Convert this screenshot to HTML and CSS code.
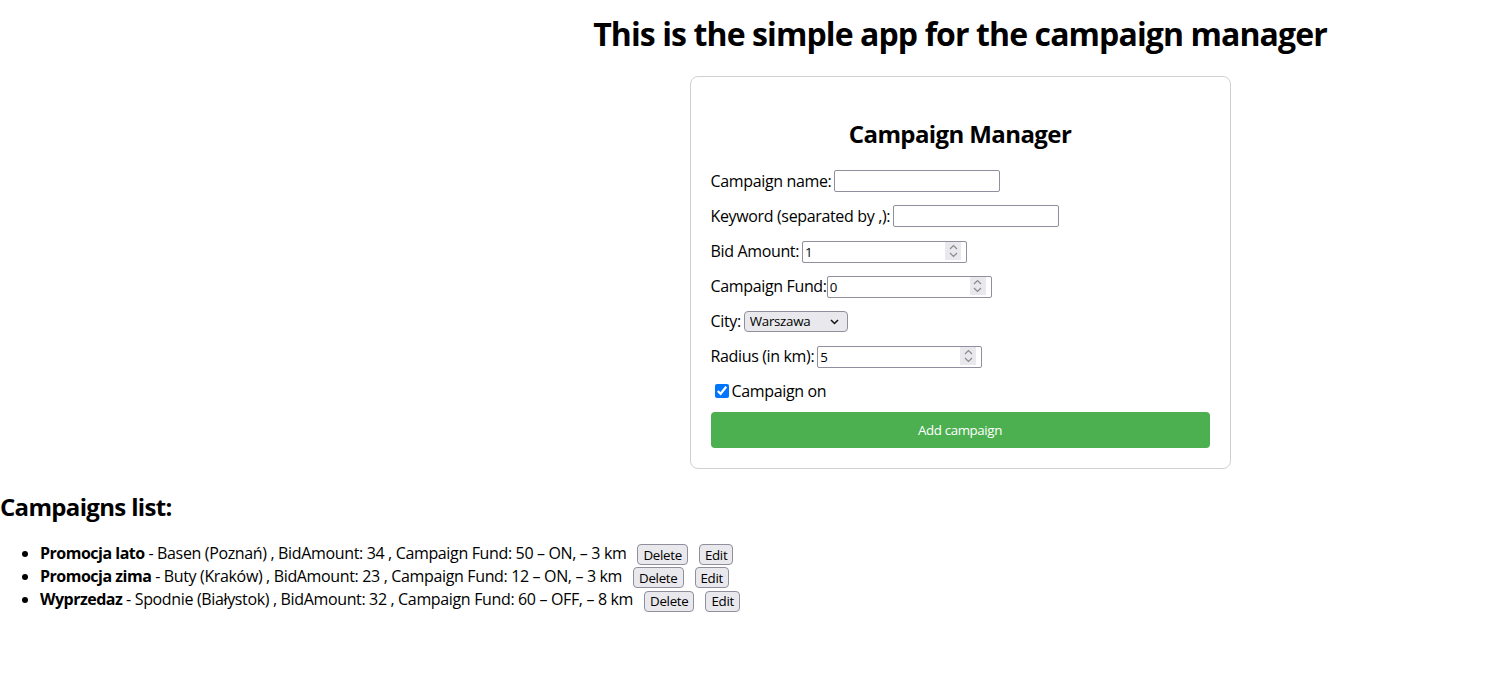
FILE: index.html
```html
<!DOCTYPE html>
<html lang="en">
<head>
<meta charset="utf-8">
<title>Campaign Manager</title>
<link rel="stylesheet" href="styles.css">
</head>
<body>
<main class="app">
  <section class="top">
    <h1 class="title">This is the simple app for the campaign manager</h1>
    <div class="card">
      <h2 class="card-title">Campaign Manager</h2>
      <form class="form">
        <div class="row"><label class="sp">Campaign name:</label><input class="text" type="text"></div>
        <div class="row"><label class="sp">Keyword (separated by ,):</label><input class="text" type="text"></div>
        <div class="row"><label class="sp">Bid Amount:</label><span class="num"><input class="text" type="text" value="1"><span class="spin"><svg width="9" height="14" viewBox="0 0 9 14"><path d="M1 5 L4.5 1.5 L8 5 M1 9 L4.5 12.5 L8 9" fill="none" stroke="#8a8a8a" stroke-width="1.2"/></svg></span></span></div>
        <div class="row"><label>Campaign Fund:</label><span class="num"><input class="text" type="text" value="0"><span class="spin"><svg width="9" height="14" viewBox="0 0 9 14"><path d="M1 5 L4.5 1.5 L8 5 M1 9 L4.5 12.5 L8 9" fill="none" stroke="#8a8a8a" stroke-width="1.2"/></svg></span></span></div>
        <div class="row"><label class="sp">City:</label><span class="sel"><select class="select"><option>Warszawa</option><option>Kraków</option><option>Poznań</option><option>Białystok</option></select><svg class="chev" width="9" height="6" viewBox="0 0 9 6"><path d="M1 1 L4.5 4.5 L8 1" fill="none" stroke="#111" stroke-width="1.5"/></svg></span></div>
        <div class="row"><label class="sp">Radius (in km):</label><span class="num"><input class="text" type="text" value="5"><span class="spin"><svg width="9" height="14" viewBox="0 0 9 14"><path d="M1 5 L4.5 1.5 L8 5 M1 9 L4.5 12.5 L8 9" fill="none" stroke="#8a8a8a" stroke-width="1.2"/></svg></span></span></div>
        <div class="row row-check"><input class="check" type="checkbox" checked><label>Campaign on</label></div>
        <button class="add" type="button">Add campaign</button>
      </form>
    </div>
  </section>
  <section class="list">
    <h2 class="list-title">Campaigns list:</h2>
    <ul class="items">
      <li><b>Promocja lato</b> - Basen (Poznań) , BidAmount: 34 , Campaign Fund: 50 – ON, – 3 km<button class="btn" type="button">Delete</button><button class="btn" type="button">Edit</button></li>
      <li><b>Promocja zima</b> - Buty (Kraków) , BidAmount: 23 , Campaign Fund: 12 – ON, – 3 km<button class="btn" type="button">Delete</button><button class="btn" type="button">Edit</button></li>
      <li><b>Wyprzedaz</b> - Spodnie (Białystok) , BidAmount: 32 , Campaign Fund: 60 – OFF, – 8 km<button class="btn" type="button">Delete</button><button class="btn" type="button">Edit</button></li>
    </ul>
  </section>
</main>
</body>
</html>
```
FILE: styles.css
```css
* { box-sizing: border-box; }
body {
  margin: 0;
  font-family: "Open Sans", "Noto Sans", sans-serif;
  font-size: 16px;
  letter-spacing: -0.35px;
  color: #000;
  background: #fff;
}
.top {
  margin-left: 428px;
  display: flex;
  flex-direction: column;
  align-items: center;
}
.title {
  font-size: 32px;
  font-weight: 700;
  line-height: 43px;
  letter-spacing: -0.9px;
  margin: 12px 0 21px;
}
.card {
  width: 541px;
  border: 1px solid #d0d0d0;
  border-radius: 8px;
  padding: 20px;
}
.card-title {
  text-align: center;
  font-size: 24px;
  line-height: 32px;
  letter-spacing: -0.6px;
  margin: 21px 0 20px;
}
.form { display: flex; flex-direction: column; }
.row {
  display: flex;
  align-items: center;
  height: 22px;
  margin-bottom: 13px;
}
.row label { line-height: 22px; }
.row .sp { margin-right: 3px; }
.text {
  width: 166px;
  height: 22px;
  border: 1px solid #8f8f9d;
  border-radius: 2px;
  padding: 1px 2px;
  font-family: "Open Sans", sans-serif;
  font-size: 13.33px;
  letter-spacing: -0.3px;
  background: #fff;
  margin: 0;
}
.num { position: relative; display: inline-block; height: 22px; }
.num .text { width: 165px; }
.spin {
  position: absolute;
  right: 6px;
  top: 2px;
  width: 16px;
  height: 18px;
  background: #e9e9ed;
  display: flex;
  align-items: center;
  justify-content: center;
}
.sel { position: relative; display: inline-block; height: 21px; }
.select {
  appearance: none;
  -webkit-appearance: none;
  width: 104px;
  height: 21px;
  border: 1px solid #8f8f9d;
  border-radius: 4px;
  background: #e9e9ed;
  font-family: "Open Sans", sans-serif;
  font-size: 13.33px;
  letter-spacing: -0.3px;
  padding: 0 5px;
  color: #000;
  display: block;
}
.chev { position: absolute; right: 9px; top: 8px; }
.row-check { margin-bottom: 10px; }
.check {
  width: 14px;
  height: 14px;
  margin: 0 3px 0 4px;
}
.add {
  height: 36px;
  border: none;
  border-radius: 4px;
  background: #4caf50;
  color: #fff;
  font-family: "Open Sans", sans-serif;
  font-size: 13.33px;
  letter-spacing: -0.4px;
}
.list-title {
  font-size: 24px;
  line-height: 32px;
  letter-spacing: -0.67px;
  margin: 22px 0 19px;
}
.items {
  margin: 0;
  padding-left: 40px;
}
.items li { line-height: 23px; }
.items b { letter-spacing: -0.5px; }
.btn {
  margin-left: 11px;
  height: 21px;
  padding: 0 5px;
  border: 1px solid #8f8f9d;
  border-radius: 4px;
  background: #e9e9ed;
  font-family: "Open Sans", sans-serif;
  font-size: 13.33px;
  letter-spacing: -0.3px;
  color: #000;
  vertical-align: middle;
}
```
